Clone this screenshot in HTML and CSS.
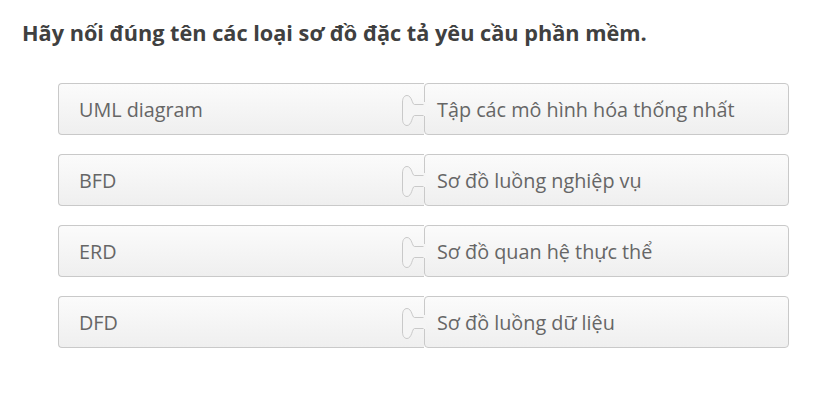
FILE: index.html
```html
<!DOCTYPE html>
<html lang="vi">
<head>
<meta charset="utf-8">
<link rel="stylesheet" href="styles.css">
</head>
<body>
<div class="page">
  <h1 class="question">Hãy nối đúng tên các loại sơ đồ đặc tả yêu cầu phần mềm.</h1>
  <div class="pairs">
    <div class="pair">
      <div class="piece left">UML diagram</div>
      <div class="piece right">
        <svg class="tab" width="26" height="52" viewBox="0 0 26 52"><path class="tab-fill" d="M23.5 21 H14.5 C12 21 12 12.5 7 12.5 C4 12.5 2.5 15.5 2.5 19 V36 C2.5 39.5 4 42.5 7 42.5 C12 42.5 12 32 14.5 32 H23.5 V33 H26 V19 H23.5 Z"/><path class="tab-line" d="M23.5 21.5 H14.5 C12 21.5 12 12.5 7 12.5 C4 12.5 2.5 15.5 2.5 19 V36 C2.5 39.5 4 42.5 7 42.5 C12 42.5 12 32.5 14.5 32.5 H23.5"/></svg>
        Tập các mô hình hóa thống nhất
      </div>
    </div>
    <div class="pair">
      <div class="piece left">BFD</div>
      <div class="piece right">
        <svg class="tab" width="26" height="52" viewBox="0 0 26 52"><path class="tab-fill" d="M23.5 21 H14.5 C12 21 12 12.5 7 12.5 C4 12.5 2.5 15.5 2.5 19 V36 C2.5 39.5 4 42.5 7 42.5 C12 42.5 12 32 14.5 32 H23.5 V33 H26 V19 H23.5 Z"/><path class="tab-line" d="M23.5 21.5 H14.5 C12 21.5 12 12.5 7 12.5 C4 12.5 2.5 15.5 2.5 19 V36 C2.5 39.5 4 42.5 7 42.5 C12 42.5 12 32.5 14.5 32.5 H23.5"/></svg>
        Sơ đồ luồng nghiệp vụ
      </div>
    </div>
    <div class="pair">
      <div class="piece left">ERD</div>
      <div class="piece right">
        <svg class="tab" width="26" height="52" viewBox="0 0 26 52"><path class="tab-fill" d="M23.5 21 H14.5 C12 21 12 12.5 7 12.5 C4 12.5 2.5 15.5 2.5 19 V36 C2.5 39.5 4 42.5 7 42.5 C12 42.5 12 32 14.5 32 H23.5 V33 H26 V19 H23.5 Z"/><path class="tab-line" d="M23.5 21.5 H14.5 C12 21.5 12 12.5 7 12.5 C4 12.5 2.5 15.5 2.5 19 V36 C2.5 39.5 4 42.5 7 42.5 C12 42.5 12 32.5 14.5 32.5 H23.5"/></svg>
        Sơ đồ quan hệ thực thể
      </div>
    </div>
    <div class="pair">
      <div class="piece left">DFD</div>
      <div class="piece right">
        <svg class="tab" width="26" height="52" viewBox="0 0 26 52"><path class="tab-fill" d="M23.5 21 H14.5 C12 21 12 12.5 7 12.5 C4 12.5 2.5 15.5 2.5 19 V36 C2.5 39.5 4 42.5 7 42.5 C12 42.5 12 32 14.5 32 H23.5 V33 H26 V19 H23.5 Z"/><path class="tab-line" d="M23.5 21.5 H14.5 C12 21.5 12 12.5 7 12.5 C4 12.5 2.5 15.5 2.5 19 V36 C2.5 39.5 4 42.5 7 42.5 C12 42.5 12 32.5 14.5 32.5 H23.5"/></svg>
        Sơ đồ luồng dữ liệu
      </div>
    </div>
  </div>
</div>
</body>
</html>
```
FILE: styles.css
```css
* { box-sizing: border-box; }
html, body {
  margin: 0;
  background: #ffffff;
}
body {
  font-family: "Open Sans", "Noto Sans", sans-serif;
}
.page {
  padding: 18px 0 0 22px;
}
.question {
  margin: 0;
  font-size: 21.7px;
  line-height: 30px;
  font-weight: 700;
  color: #404040;
}
.pairs {
  margin: 35px 0 0 36px;
  display: flex;
  flex-direction: column;
  gap: 19px;
  width: 731px;
}
.pair {
  display: flex;
  height: 52px;
}
.piece {
  height: 52px;
  display: flex;
  align-items: center;
  font-size: 19.8px;
  color: #666666;
  border: 1px solid #c9c9c9;
  border-radius: 4px;
  background: linear-gradient(#fbfbfb, #efefef);
}
.left {
  width: 366px;
  padding-left: 20px;
  border-right: none;
  border-top-right-radius: 0;
  border-bottom-right-radius: 0;
}
.right {
  position: relative;
  width: 365px;
  padding-left: 12px;
}
.tab {
  position: absolute;
  left: -25px;
  top: -1px;
}
.tab-fill {
  fill: #f5f5f5;
}
.tab-line {
  fill: none;
  stroke: #c9c9c9;
  stroke-width: 1;
}
```
